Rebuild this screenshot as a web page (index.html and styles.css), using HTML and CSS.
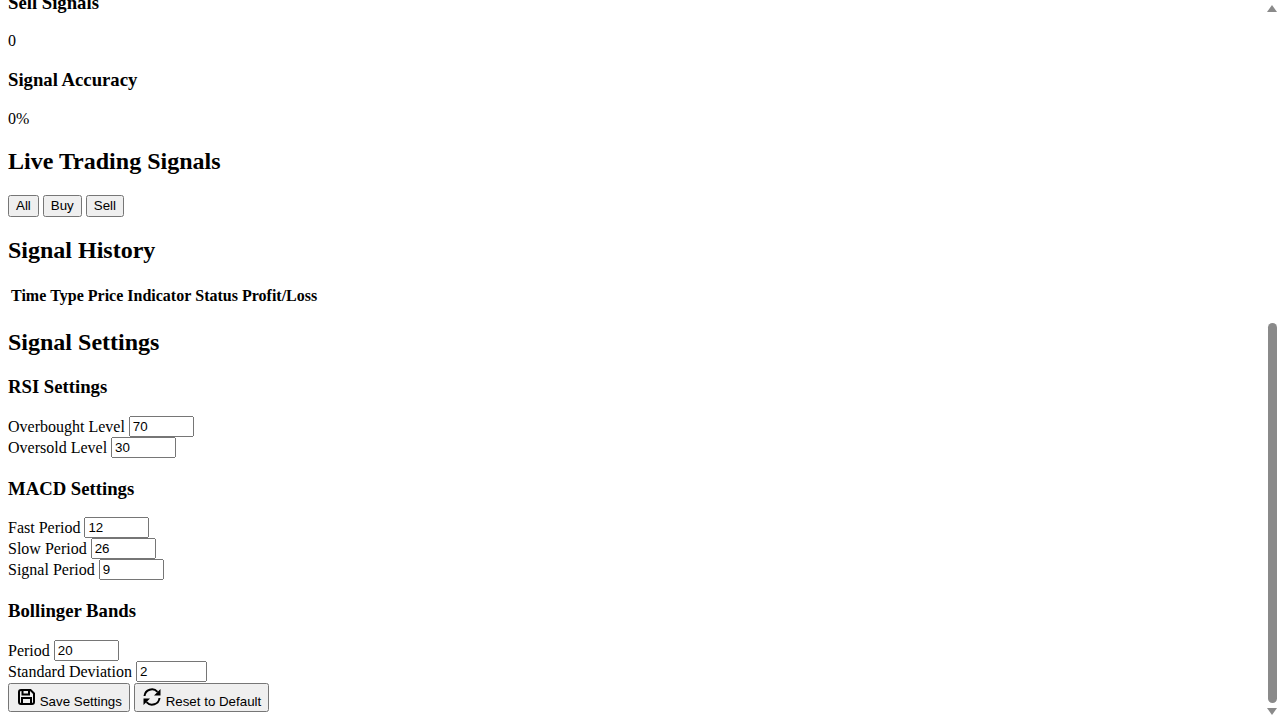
FILE: index.html

```html
<!DOCTYPE html>
<html lang="en">
<head>
  <meta charset="UTF-8">
  <title>Trading Signals</title>
  <link rel="stylesheet" href="styles.css">
</head>
<body>
  <div class="page">
    <h3>Sell Signals</h3>
    <p>0</p>
    <h3>Signal Accuracy</h3>
    <p>0%</p>

    <h2>Live Trading Signals</h2>
    <div class="filters">
      <button>All</button>
      <button>Buy</button>
      <button>Sell</button>
    </div>

    <h2>Signal History</h2>
    <table>
      <thead>
        <tr>
          <th>Time</th>
          <th>Type</th>
          <th>Price</th>
          <th>Indicator</th>
          <th>Status</th>
          <th>Profit/Loss</th>
        </tr>
      </thead>
      <tbody>
        <tr></tr>
      </tbody>
    </table>

    <h2>Signal Settings</h2>
    <h3>RSI Settings</h3>
    <div><label>Overbought Level</label> <input type="text" value="70"></div>
    <div><label>Oversold Level</label> <input type="text" value="30"></div>

    <h3>MACD Settings</h3>
    <div><label>Fast Period</label> <input type="text" value="12"></div>
    <div><label>Slow Period</label> <input type="text" value="26"></div>
    <div><label>Signal Period</label> <input type="text" value="9"></div>

    <h3>Bollinger Bands</h3>
    <div><label>Period</label> <input type="text" value="20"></div>
    <div><label>Standard Deviation</label> <input class="wide" type="text" value="2"></div>

    <div class="actions">
      <button>
        <svg class="icon" viewBox="0 0 20 20">
          <path d="M5 4h9.500L18 7.500V16a2 2 0 0 1-2 2H5a2 2 0 0 1-2-2V6a2 2 0 0 1 2-2z"/>
          <path d="M6.500 4v4.500H13V4M6 18v-6h9v6"/>
        </svg>
        Save Settings
      </button>
      <button>
        <svg class="icon" viewBox="0 0 20 20">
          <path d="M2.500 10A7.500 7.500 0 0 1 15.500 5.800"/>
          <path d="M17.500 12A7.500 7.500 0 0 1 4.500 16.200"/>
          <path class="head" d="M18.500 3v6.500H12zM1.500 19v-6.500H8z"/>
        </svg>
        Reset to Default
      </button>
    </div>
  </div>

  <div class="scrollbar">
    <div class="arrow-up"></div>
    <div class="track"><div class="thumb"></div></div>
    <div class="arrow-down"></div>
  </div>
</body>
</html>
```

FILE: styles.css

```css
html, body {
  height: 100%;
  overflow: hidden;
}

body {
  margin: 0;
  background: #fff;
  color: #000;
  font-family: "Liberation Serif", serif;
}

.page {
  margin: -27px 16px 0 8px;
}

input {
  width: 57px;
  margin-top: -1px;
  margin-bottom: 1px;
  font-family: "Liberation Sans", sans-serif;
  vertical-align: 1px;
}

input.wide {
  width: 63px;
}

button {
  font-family: "Liberation Sans", sans-serif;
}

.filters button {
  line-height: 16px;
}

.icon {
  width: 20px;
  height: 20px;
  fill: none;
  stroke: #000;
  stroke-width: 2;
}

.icon .head {
  fill: #000;
  stroke: none;
}

.scrollbar {
  position: fixed;
  top: 0;
  right: 0;
  bottom: 0;
  width: 16px;
  display: flex;
  flex-direction: column;
  align-items: center;
  background: #fff;
}

.arrow-up {
  margin-top: 5px;
  border-left: 5px solid transparent;
  border-right: 5px solid transparent;
  border-bottom: 7px solid #8a8a8a;
}

.arrow-down {
  margin-bottom: 5px;
  border-left: 5px solid transparent;
  border-right: 5px solid transparent;
  border-top: 7px solid #8a8a8a;
}

.track {
  flex: 1;
  display: flex;
  flex-direction: column;
  justify-content: flex-end;
  padding-bottom: 5px;
}

.thumb {
  width: 9px;
  height: 380px;
  border-radius: 5px;
  background: #8a8a8a;
}
```
